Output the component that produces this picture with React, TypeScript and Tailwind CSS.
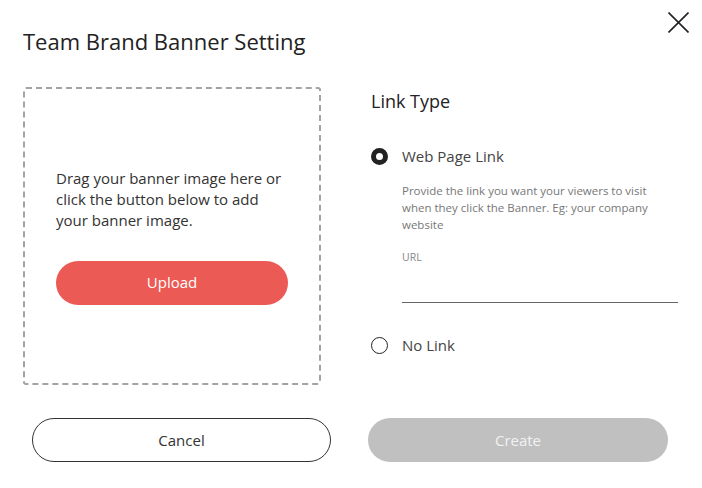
function Radio({ checked }: { checked: boolean }) {
  return checked ? (
    <span className="w-[17px] h-[17px] rounded-full border-[5px] border-[#222] shrink-0" />
  ) : (
    <span className="w-[17px] h-[17px] rounded-full border border-[#222] shrink-0" />
  );
}

export default function App() {
  return (
    <div
      className="relative w-[702px] h-[488px] bg-white text-[#333]"
      style={{ fontFamily: '"Open Sans", "Noto Sans", sans-serif' }}
    >
      <button className="absolute top-[12px] left-[668px] text-[#222]" aria-label="Close">
        <svg width="21" height="21" viewBox="0 0 21 21" fill="none" stroke="currentColor" strokeWidth="1.6">
          <path d="M0.5 0.5 L20.5 20.5 M20.5 0.5 L0.5 20.5" />
        </svg>
      </button>

      <div className="pl-[23px] pt-[26px]">
        <h2 className="text-[22px] leading-[30px] text-[#222]">Team Brand Banner Setting</h2>
      </div>

      <div className="flex pl-[23px] mt-[31px]">
        <div className="w-[298px] h-[298px] border-2 border-dashed border-[#a3a3a3] rounded-[3px] flex flex-col justify-center pl-[31px] pr-[31px]">
          <p className="text-[15px] leading-[21px] text-[#333]">
            Drag your banner image here or click the button below to add your banner image.
          </p>
          <button className="mt-[30px] w-[232px] h-[44px] rounded-full bg-[#eb5a54] text-white text-[15px]">
            Upload
          </button>
        </div>

        <div className="ml-[50px] w-[307px] pt-[2px]">
          <h3 className="text-[18px] leading-[24px] text-[#222]">Link Type</h3>

          <div className="flex items-center mt-[32px]">
            <Radio checked />
            <span className="ml-[14px] text-[15px] text-[#444]">Web Page Link</span>
          </div>
          <div className="pl-[31px] mt-[14px]">
            <p className="text-[11.5px] leading-[17px] text-[#777] pr-[10px]">
              Provide the link you want your viewers to visit when they click the Banner. Eg: your company website
            </p>
            <label className="block mt-[17px] text-[10.5px] text-[#888]">URL</label>
            <input className="block w-[276px] h-[38px] border-b border-[#666] outline-none text-[13px]" />
          </div>

          <div className="flex items-center mt-[31px]">
            <Radio checked={false} />
            <span className="ml-[14px] text-[15px] text-[#444]">No Link</span>
          </div>
        </div>
      </div>

      <div className="flex pl-[32px] mt-[33px]">
        <button className="w-[299px] h-[44px] rounded-full border border-[#333] text-[15px] text-[#333]">
          Cancel
        </button>
        <button className="ml-[37px] w-[300px] h-[44px] rounded-full bg-[#c0c0c0] text-[15px] text-[#f2f2f2]">
          Create
        </button>
      </div>
    </div>
  );
}
